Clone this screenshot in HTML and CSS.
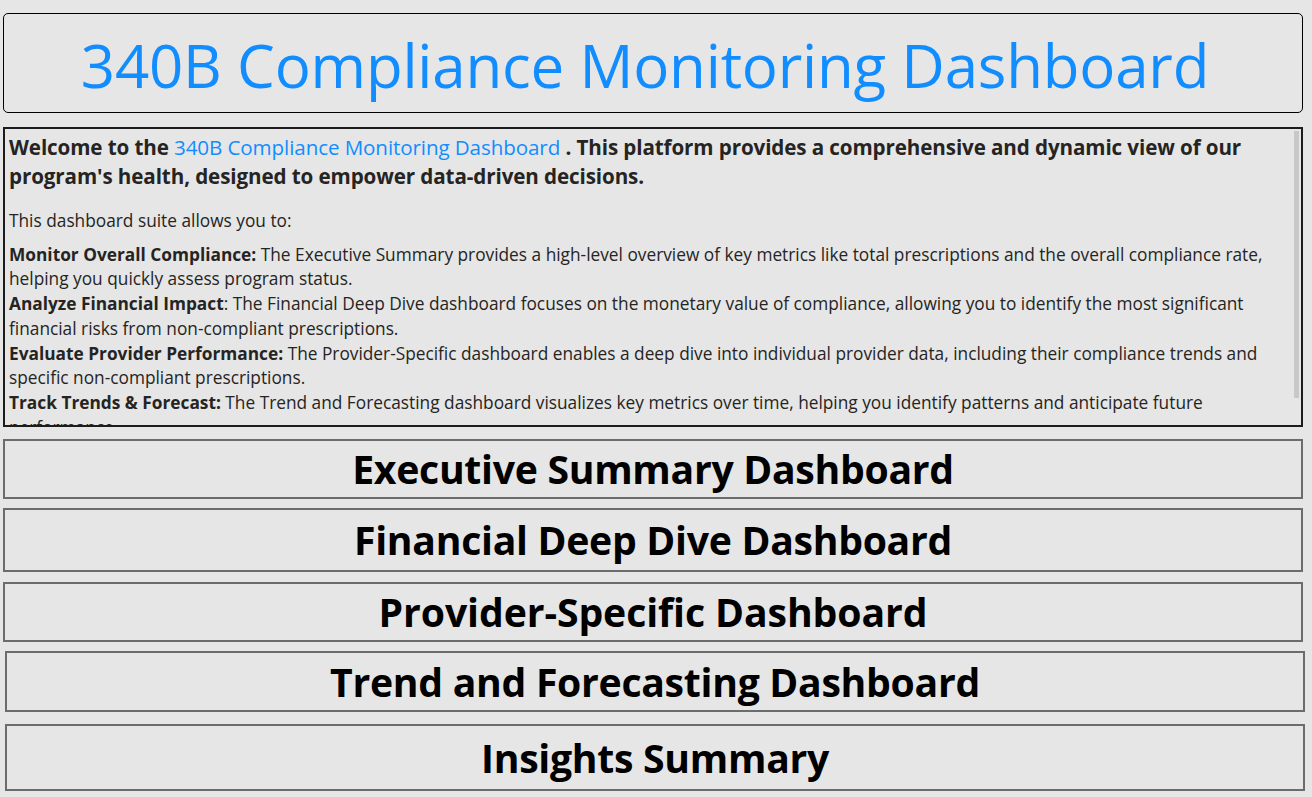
FILE: index.html
```html
<!DOCTYPE html>
<html lang="en">
<head>
<meta charset="utf-8">
<title>340B Compliance Monitoring Dashboard</title>
<link rel="stylesheet" href="styles.css">
</head>
<body>
<main class="page">
  <header class="title-box">
    <h1 class="title">340B Compliance Monitoring Dashboard</h1>
  </header>

  <section class="intro">
    <p class="lead">Welcome to the <span class="accent">340B Compliance Monitoring Dashboard</span> . This platform provides a comprehensive and dynamic view of our<br>program's health, designed to empower data-driven decisions.</p>
    <p class="sub">This dashboard suite allows you to:</p>
    <p class="list">
      <b>Monitor Overall Compliance:</b> The Executive Summary provides a high-level overview of key metrics like total prescriptions and the overall compliance rate,<br>helping you quickly assess program status.<br>
      <b>Analyze Financial Impact</b>: The Financial Deep Dive dashboard focuses on the monetary value of compliance, allowing you to identify the most significant<br>financial risks from non-compliant prescriptions.<br>
      <b>Evaluate Provider Performance:</b> The Provider-Specific dashboard enables a deep dive into individual provider data, including their compliance trends and<br>specific non-compliant prescriptions.<br>
      <b>Track Trends &amp; Forecast:</b> The Trend and Forecasting dashboard visualizes key metrics over time, helping you identify patterns and anticipate future<br>performance.
    </p>
  </section>

  <nav class="nav">
    <button class="nav-btn b1">Executive Summary Dashboard</button>
    <button class="nav-btn b2">Financial Deep Dive Dashboard</button>
    <button class="nav-btn b3">Provider-Specific Dashboard</button>
    <button class="nav-btn b4">Trend and Forecasting Dashboard</button>
    <button class="nav-btn b5">Insights Summary</button>
  </nav>
</main>
</body>
</html>
```

FILE: styles.css
```css
html, body {
  margin: 0;
  padding: 0;
  background: #e6e6e6;
  height: 100%;
  overflow: hidden;
}

body {
  font-family: "Open Sans", "Noto Sans", sans-serif;
  color: #252423;
}

.page {
  display: flex;
  flex-direction: column;
  padding: 13px 0 0 3px;
  width: 1300px;
}

.title-box {
  box-sizing: border-box;
  height: 100px;
  border: 1px solid #000;
  border-radius: 5px;
  display: flex;
  align-items: center;
  justify-content: center;
  padding-right: 16px;
}

.title {
  margin: 0;
  font-size: 60px;
  font-weight: 400;
  color: #118dff;
  letter-spacing: -0.2px;
  line-height: 1;
  padding-top: 4px;
}

.intro {
  position: relative;
  box-sizing: border-box;
  margin-top: 14px;
  height: 300px;
  border: 2px solid #1c1c1c;
  padding: 4px 0 0 4px;
  overflow: hidden;
}

/* decorative scroll thumb drawn over the text panel */
.intro::after {
  content: "";
  position: absolute;
  top: 2px;
  right: 2px;
  width: 5px;
  height: 267px;
  background: #c8c8c8;
}

.intro p {
  margin: 0;
  white-space: nowrap;
}

.lead {
  font-size: 20.6px;
  font-weight: 700;
  line-height: 29px;
  letter-spacing: -0.1px;
}

.accent {
  color: #118dff;
  font-weight: 400;
}

.sub {
  margin-top: 18px !important;
  font-size: 17.3px;
  line-height: 24.7px;
}

.list {
  margin-top: 9px !important;
  font-size: 17.3px;
  line-height: 24.7px;
}

.list b {
  font-weight: 700;
}

.nav {
  display: flex;
  flex-direction: column;
}

.nav-btn {
  box-sizing: border-box;
  width: 1300px;
  border: 2px solid #6c6c6c;
  background: #e6e6e6;
  font-family: "Open Sans", "Noto Sans", sans-serif;
  font-weight: 700;
  font-size: 39.2px;
  color: #000;
  padding: 0;
  margin: 0;
  line-height: 1;
  display: flex;
  align-items: center;
  justify-content: center;
  letter-spacing: -0.3px;
}

.b1 { margin-top: 12px; height: 60px; }
.b2 { margin-top: 9px; height: 64px; }
.b3 { margin-top: 10px; height: 60px; letter-spacing: -0.1px; }
.b4 { margin-top: 9px; height: 61px; margin-left: 2px; }
.b5 { margin-top: 12px; height: 67px; margin-left: 2px; }
```
